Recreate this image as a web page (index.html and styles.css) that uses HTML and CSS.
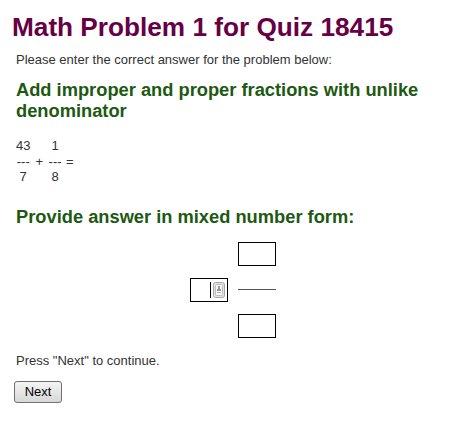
FILE: index.html
```html
<!DOCTYPE html>
<html lang="en">
<head>
	<meta charset="UTF-8">
	<title>Math Problem 1 for Quiz 18415</title>
	<link rel="stylesheet" href="styles.css">
</head>
<body>

<h1 class="title">Math Problem 1 for Quiz 18415</h1>

<div class="quiz">
	<p class="note intro">Please enter the correct answer for the problem below:</p>
	<h2 class="topic">Add improper and proper fractions with unlike denominator</h2>

	<!-- the problem, written as text fractions -->
	<div class="problem">
		<div class="frac">
			<span>43</span>
			<span>---</span>
			<span>7</span>
		</div>
		<span class="op">+</span>
		<div class="frac">
			<span>1</span>
			<span>---</span>
			<span>8</span>
		</div>
		<span class="op">=</span>
	</div>

	<h2 class="topic ask">Provide answer in mixed number form:</h2>

	<!-- answer: whole number + numerator / denominator -->
	<div class="answer">
		<div class="whole">
			<input type="text" class="box" name="whole">
			<span class="caret"></span>
			<svg class="fill-icon" width="12" height="16" viewBox="0 0 12 16">
				<rect x="0.5" y="0.5" width="11" height="15" rx="2" fill="#e4e4e4" stroke="#a8a8a8"/>
				<rect x="2.5" y="2.5" width="7" height="11" rx="1" fill="#f7f7f7" stroke="#bdbdbd"/>
				<rect x="5" y="4" width="2" height="3" fill="#9a9a9a"/>
				<rect x="4" y="7" width="4" height="2" fill="#9a9a9a"/>
				<rect x="4" y="10" width="4" height="1" fill="#b5b5b5"/>
			</svg>
		</div>
		<div class="fraction">
			<input type="text" class="box" name="numerator">
			<div class="bar"></div>
			<input type="text" class="box" name="denominator">
		</div>
	</div>

	<p class="note press">Press "Next" to continue.</p>
	<button class="next" type="button">Next</button>
</div>

</body>
</html>
```

FILE: styles.css
```css
*{margin: 0;padding: 0;}
body{
	margin: 8px;
	font-family: "Liberation Sans", Arial, sans-serif;
	color: #333;
	background: #fff;
}
/*标题*/
.title{
	font-size: 26.2px;
	line-height: 30px;
	font-weight: bold;
	color: #660044;
	margin: 4px 0 0 4px;
}
.quiz{
	padding-left: 8px;
}
.note{
	font-size: 13px;
	line-height: 16px;
}
.intro{
	margin-top: 10px;
}
.topic{
	font-size: 18.3px;
	line-height: 21px;
	font-weight: bold;
	color: #1d5912;
	margin-top: 11px;
}
/*题目*/
.problem{
	display: flex;
	align-items: center;
	margin-top: 17px;
	font-size: 13px;
	line-height: 15.5px;
}
.problem .frac{
	display: flex;
	flex-direction: column;
	align-items: center;
	min-width: 14px;
}
.problem .op{
	margin: 0 5px;
}
.problem .op:last-child{
	margin-left: 4px;
}
.ask{
	margin-top: 21px;
}
/*答案*/
.answer{
	display: flex;
	justify-content: center;
	align-items: center;
	gap: 10px;
	margin-top: 15px;
	padding-right: 5px;
}
.box{
	display: block;
	box-sizing: border-box;
	width: 38px;
	height: 24px;
	border: 1px solid #000;
	background: #fff;
	outline: none;
}
.whole{
	position: relative;
}
.whole .caret{
	position: absolute;
	left: 20px;
	top: 4px;
	width: 1px;
	height: 16px;
	background: #000;
}
.whole .fill-icon{
	position: absolute;
	left: 23px;
	top: 4px;
}
.fraction{
	display: flex;
	flex-direction: column;
}
.fraction .bar{
	height: 1px;
	background: #555;
	margin: 23px 0 24px;
}
.press{
	margin-top: 15px;
}
.next{
	display: block;
	width: 48px;
	height: 22px;
	margin: 12px 0 0 -2px;
	border: 1px solid #707070;
	border-radius: 3px;
	background: linear-gradient(#f4f4f4, #e6e6e6 50%, #d8d8d8);
	font-family: "Liberation Sans", Arial, sans-serif;
	font-size: 13px;
	color: #000;
	cursor: pointer;
}
```
